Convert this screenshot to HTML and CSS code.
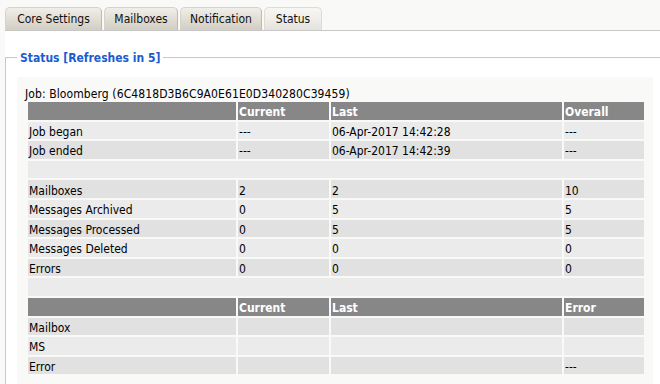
FILE: index.html
```html
<!DOCTYPE html>
<html>
<head>
<meta charset="utf-8">
<link rel="stylesheet" href="styles.css">
</head>
<body>
<div class="tabs">
  <div class="tab t1">Core Settings</div>
  <div class="tab t2">Mailboxes</div>
  <div class="tab t3">Notification</div>
  <div class="tab t4 active">Status</div>
</div>
<div class="content">
  <fieldset class="group">
    <legend>Status [Refreshes in 5]</legend>
    <div class="panel">
      <div class="job">Job: Bloomberg (6C4818D3B6C9A0E61E0D340280C39459)</div>
      <table class="stats">
        <colgroup><col class="c1"><col class="c2"><col class="c3"><col class="c4"></colgroup>
        <tr class="head"><td></td><td>Current</td><td>Last</td><td>Overall</td></tr>
        <tr class="a"><td>Job began</td><td>---</td><td>06-Apr-2017 14:42:28</td><td>---</td></tr>
        <tr class="b"><td>Job ended</td><td>---</td><td>06-Apr-2017 14:42:39</td><td>---</td></tr>
        <tr class="a"><td colspan="4"></td></tr>
        <tr class="b"><td>Mailboxes</td><td>2</td><td>2</td><td>10</td></tr>
        <tr class="a"><td>Messages Archived</td><td>0</td><td>5</td><td>5</td></tr>
        <tr class="b"><td>Messages Processed</td><td>0</td><td>5</td><td>5</td></tr>
        <tr class="a"><td>Messages Deleted</td><td>0</td><td>0</td><td>0</td></tr>
        <tr class="b"><td>Errors</td><td>0</td><td>0</td><td>0</td></tr>
        <tr class="a"><td colspan="4"></td></tr>
        <tr class="head"><td></td><td>Current</td><td>Last</td><td>Error</td></tr>
        <tr class="b"><td>Mailbox</td><td></td><td></td><td></td></tr>
        <tr class="a"><td>MS</td><td></td><td></td><td></td></tr>
        <tr class="b"><td>Error</td><td></td><td></td><td>---</td></tr>
      </table>
    </div>
  </fieldset>
</div>
</body>
</html>
```
FILE: styles.css
```css
html, body {
  margin: 0;
  padding: 0;
  overflow: hidden;
}
body {
  background: #f9f9f7;
  font-family: "DejaVu Sans Condensed", "DejaVu Sans", sans-serif;
  font-stretch: condensed;
  font-size: 12px;
  color: #000;
  height: 384px;
}
.tabs {
  display: flex;
  align-items: flex-end;
  gap: 2px;
  height: 30px;
  box-sizing: border-box;
  padding: 7px 0 0 5px;
}
.tab {
  box-sizing: border-box;
  height: 23px;
  line-height: 23px;
  text-align: center;
  color: #111;
  background: linear-gradient(#f0eee8 0%, #e2dfd7 45%, #d2cec4 100%);
  border: 1px solid #d6d3cb;
  border-bottom: none;
  border-right-color: #bdb9ae;
  border-radius: 5px 5px 0 0;
}
.t1 { width: 97px; }
.t2 { width: 74px; }
.t3 { width: 82px; }
.t4 { width: 58px; }
.tab.active {
  background: linear-gradient(#f7f6f3 0%, #efeee9 50%, #e4e2dc 100%);
  border-color: #dddbd4;
}
.content {
  margin-left: 5px;
  background: #fff;
  border-top: 1px solid #c8c8c8;
  height: 360px;
}
.group {
  margin: 18px 0 0 0;
  padding: 12px 7px 6px 11px;
  border: 1px solid #c8c8c8;
  border-right: none;
  border-bottom: none;
  min-width: 0;
}
.group legend {
  padding: 2px 3px 0;
  font-weight: bold;
  line-height: 14px;
  color: #1a5ccf;
}
.panel {
  background: #f9f9f7;
  padding: 11px 0 8px 8px;
}
.job {
  line-height: 12px;
  white-space: nowrap;
  letter-spacing: 0.1px;
}
.stats {
  margin-left: 1px;
  width: 620px;
  table-layout: fixed;
  border-collapse: separate;
  border-spacing: 2px;
}
.c1 { width: 208px; }
.c2 { width: 91px; }
.c3 { width: 231px; }
.c4 { width: 80px; }
.stats td {
  height: 14.6px;
  padding: 3px 0 0 1px;
  line-height: 14px;
  white-space: nowrap;
  vertical-align: middle;
}
.stats tr.head td {
  background: #878787;
  color: #fff;
  font-weight: bold;
}
.stats tr.a td { background: #ebebeb; }
.stats tr.b td { background: #e1e1e1; }
```
